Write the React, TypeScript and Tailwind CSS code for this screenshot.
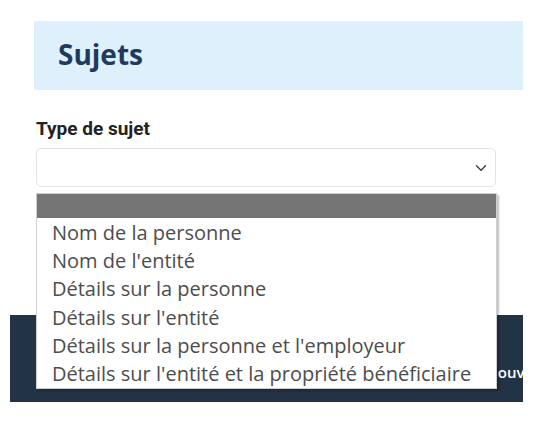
import { ChevronDown } from 'lucide-react'

const options = [
  'Nom de la personne',
  "Nom de l'entité",
  'Détails sur la personne',
  "Détails sur l'entité",
  "Détails sur la personne et l'employeur",
  "Détails sur l'entité et la propriété bénéficiaire",
]

export default function App() {
  return (
    <div className="relative w-[550px] h-[426px] bg-white overflow-hidden font-['Open_Sans',sans-serif]">
      <div className="pl-[10px] pr-[27px] pt-[21px]">
        {/* Header */}
        <div className="ml-[24px] h-[69px] bg-[#dff0fd] flex items-center pl-[24px] pb-[4px]">
          <h1 className="text-[28px] font-bold text-[#1f3a5c] leading-none">Sujets</h1>
        </div>

        {/* Field */}
        <div className="ml-[26px] mt-[28px] w-[460px]">
          <label className="block font-['Roboto',sans-serif] font-bold text-[19px] text-[#222] leading-[22px]">
            Type de sujet
          </label>
          <div className="mt-[8px] h-[39px] border border-[#e3e3e3] rounded-[5px] bg-white flex items-center justify-end pr-[5px]">
            <ChevronDown className="w-[18px] h-[18px] text-[#444]" strokeWidth={2} />
          </div>
        </div>

        {/* Footer bar */}
        <div className="mt-[128px] h-[87px] bg-[#233346] overflow-hidden whitespace-nowrap pl-[476px] pt-[45px]">
          <span className="text-white font-semibold text-[15px]">Nouveau sujet</span>
        </div>
      </div>

      {/* Open select list */}
      <div className="absolute left-[36px] top-[193px] w-[461px] h-[196px] bg-white border border-[#cfcfcf] shadow-[2px_2px_2px_rgba(0,0,0,0.25)]">
        <div className="h-[24px] bg-[#757575]" />
        <ul className="pt-[1px]">
          {options.map((o) => (
            <li key={o} className="h-[28.2px] flex items-center px-[15px] text-[20px] text-[#4d4d4d] whitespace-nowrap">
              {o}
            </li>
          ))}
        </ul>
      </div>
    </div>
  )
}
